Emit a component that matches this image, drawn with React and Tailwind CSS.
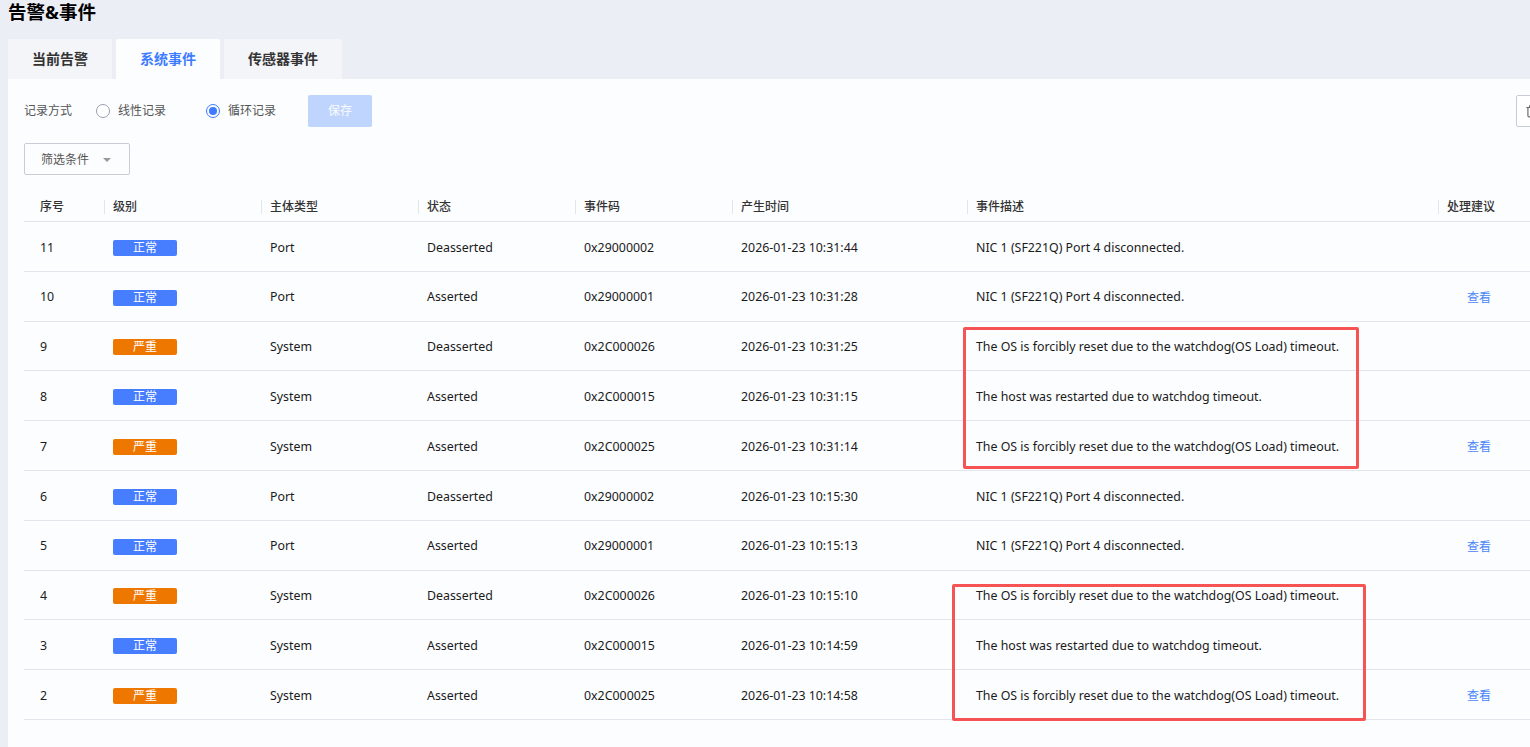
import React, { useState } from "react";
import { Trash2 } from "lucide-react";

const OS_RESET = "The OS is forcibly reset due to the watchdog(OS Load) timeout.";
const HOST_RESTART = "The host was restarted due to watchdog timeout.";
const NIC_DOWN = "NIC 1 (SF221Q) Port 4 disconnected.";

const events = [
  { id: 11, level: "normal", subject: "Port", state: "Deasserted", code: "0x29000002", time: "2026-01-23 10:31:44", desc: NIC_DOWN, tip: false },
  { id: 10, level: "normal", subject: "Port", state: "Asserted", code: "0x29000001", time: "2026-01-23 10:31:28", desc: NIC_DOWN, tip: true },
  { id: 9, level: "major", subject: "System", state: "Deasserted", code: "0x2C000026", time: "2026-01-23 10:31:25", desc: OS_RESET, tip: false },
  { id: 8, level: "normal", subject: "System", state: "Asserted", code: "0x2C000015", time: "2026-01-23 10:31:15", desc: HOST_RESTART, tip: false },
  { id: 7, level: "major", subject: "System", state: "Asserted", code: "0x2C000025", time: "2026-01-23 10:31:14", desc: OS_RESET, tip: true },
  { id: 6, level: "normal", subject: "Port", state: "Deasserted", code: "0x29000002", time: "2026-01-23 10:15:30", desc: NIC_DOWN, tip: false },
  { id: 5, level: "normal", subject: "Port", state: "Asserted", code: "0x29000001", time: "2026-01-23 10:15:13", desc: NIC_DOWN, tip: true },
  { id: 4, level: "major", subject: "System", state: "Deasserted", code: "0x2C000026", time: "2026-01-23 10:15:10", desc: OS_RESET, tip: false },
  { id: 3, level: "normal", subject: "System", state: "Asserted", code: "0x2C000015", time: "2026-01-23 10:14:59", desc: HOST_RESTART, tip: false },
  { id: 2, level: "major", subject: "System", state: "Asserted", code: "0x2C000025", time: "2026-01-23 10:14:58", desc: OS_RESET, tip: true },
];

const headers = ["序号", "级别", "主体类型", "状态", "事件码", "产生时间", "事件描述", "处理建议"];
const cols = "grid grid-cols-[73px_157px_157px_157px_157px_235px_471px_1fr]";

const Badge = ({ level }) =>
  level === "major" ? (
    <span className="inline-flex items-center justify-center w-16 h-4 rounded-[2px] bg-[#ee7700] text-white text-xs leading-none">严重</span>
  ) : (
    <span className="inline-flex items-center justify-center w-16 h-4 rounded-[2px] bg-[#477dff] text-white text-xs leading-none">正常</span>
  );

const Radio = ({ checked, label, onClick }) => (
  <label className="flex items-center gap-2 cursor-pointer" onClick={onClick}>
    {checked ? (
      <span className="w-[14px] h-[14px] rounded-full border border-[#3d7bff] flex items-center justify-center">
        <span className="w-2 h-2 rounded-full bg-[#3d7bff]" />
      </span>
    ) : (
      <span className="w-[14px] h-[14px] rounded-full border border-[#9aa0b0] bg-white" />
    )}
    <span className="text-xs text-[#555]">{label}</span>
  </label>
);

const App = () => {
  const [mode, setMode] = useState("loop");
  const [tab, setTab] = useState(1);
  const tabs = ["当前告警", "系统事件", "传感器事件"];

  return (
    <div
      className="relative w-[1530px] h-[747px] overflow-hidden bg-[#eceef5] text-[#1a1a1a]"
      style={{ fontFamily: '"Noto Sans", "Noto Sans CJK SC", sans-serif' }}
    >
      <div className="w-[1620px]">
        <h1 className="px-2 h-[39px] text-[18.5px] font-bold leading-6 text-black">告警&amp;事件</h1>

        {/* tabs */}
        <div className="flex gap-1 px-2">
          {tabs.map((t, i) => (
            <button
              key={t}
              onClick={() => setTab(i)}
              className={
                i === tab
                  ? "h-[40px] px-6 bg-[#fcfdff] text-sm font-bold text-[#3d7bff] rounded-t-[2px]"
                  : "h-[40px] px-6 bg-[#f4f5f9] text-sm font-bold text-[#333] rounded-t-[2px]"
              }
            >
              {t}
            </button>
          ))}
        </div>

        {/* panel */}
        <div className="ml-2 bg-[#fcfdff] px-4 pt-4 h-[668px]">
          <div className="flex items-center h-8">
            <span className="text-xs text-[#555] mr-6">记录方式</span>
            <Radio checked={mode === "linear"} label="线性记录" onClick={() => setMode("linear")} />
            <div className="w-10" />
            <Radio checked={mode === "loop"} label="循环记录" onClick={() => setMode("loop")} />
            <button className="ml-8 w-16 h-8 rounded-[2px] bg-[#c0d5fd] text-xs text-white/90">保存</button>
            <button className="ml-[1144px] w-8 h-8 rounded-[2px] border border-[#c8ccd6] bg-white flex items-center justify-center text-[#666]">
              <Trash2 size={14} />
            </button>
          </div>

          <button className="mt-4 w-[106px] h-8 border border-[#c8ccd6] rounded-[2px] flex items-center pl-4 pt-[1px] text-xs text-[#555]">
            筛选条件
            <svg width="8" height="4" viewBox="0 0 8 4" className="ml-[14px]">
              <path d="M0 0h8L4 4z" fill="#999" />
            </svg>
          </button>

          {/* table */}
          <div className="mt-4 w-[1520px]">
            <div className={`${cols} h-[31px] pt-[1px] items-center border-b border-[#e3e5ec]`}>
              {headers.map((h, i) => (
                <div key={h} className="flex items-center text-xs font-medium text-[#333]">
                  {i === 0 ? (
                    <span className="pl-4">{h}</span>
                  ) : (
                    <>
                      <span className="ml-[7px] mr-2 w-px h-[14px] bg-[#e3e5ec]" />
                      <span>{h}</span>
                    </>
                  )}
                </div>
              ))}
            </div>

            {events.map((e) => (
              <div key={e.id} className={`${cols} h-[49.8px] pt-[3px] items-center border-b border-[#e3e5ec] text-[12.37px]`}>
                <div className="pl-4">{e.id}</div>
                <div className="pl-4 flex"><Badge level={e.level} /></div>
                <div className="pl-4">{e.subject}</div>
                <div className="pl-4">{e.state}</div>
                <div className="pl-4">{e.code}</div>
                <div className="pl-4">{e.time}</div>
                <div className="pl-4">{e.desc}</div>
                <div className="pl-9 text-xs">
                  {e.tip && <a className="text-[#4a86f7] cursor-pointer">查看</a>}
                </div>
              </div>
            ))}
          </div>
        </div>
      </div>

      {/* annotation boxes drawn over the table */}
      <div className="absolute left-[963px] top-[327px] w-[396px] h-[142px] border-[3px] border-[#f65454] rounded-[2px] pointer-events-none" />
      <div className="absolute left-[952px] top-[584px] w-[414px] h-[137px] border-[3px] border-[#f65454] rounded-[2px] pointer-events-none" />
    </div>
  );
};

export default App;
